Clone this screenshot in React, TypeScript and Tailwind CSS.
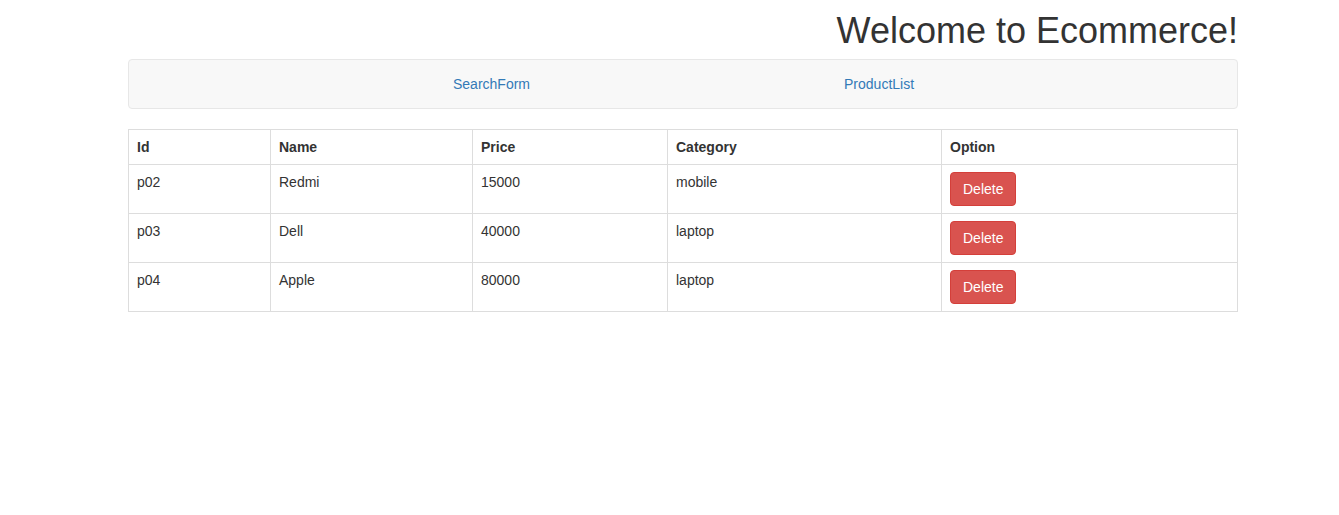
const products = [
  { id: 'p02', name: 'Redmi', price: 15000, category: 'mobile' },
  { id: 'p03', name: 'Dell', price: 40000, category: 'laptop' },
  { id: 'p04', name: 'Apple', price: 80000, category: 'laptop' },
];

const cell = 'border border-[#ddd] px-[8px] py-[7px] text-left align-top leading-[20px]';

export default function App() {
  return (
    <div className="min-h-screen bg-white font-['Liberation_Sans',Arial,sans-serif] text-[14px] text-[#333]">
      <div className="ml-[128px] w-[1110px]">
        <h1 className="mt-[11px] mb-[8px] h-[40px] text-right text-[36px] leading-[40px] font-normal">
          Welcome to Ecommerce!
        </h1>

        <nav className="mb-[20px] flex h-[50px] items-center rounded-[4px] border border-[#e7e7e7] bg-[#f8f8f8]">
          <a href="#" className="ml-[324px] leading-[20px] text-[#337ab7]">SearchForm</a>
          <a href="#" className="ml-[314px] leading-[20px] text-[#337ab7]">ProductList</a>
        </nav>

        <table className="w-full table-fixed border-collapse">
          <colgroup>
            <col className="w-[142px]" />
            <col className="w-[202px]" />
            <col className="w-[195px]" />
            <col className="w-[274px]" />
            <col />
          </colgroup>
          <thead>
            <tr>
              <th className={`${cell} font-bold`}>Id</th>
              <th className={`${cell} font-bold`}>Name</th>
              <th className={`${cell} font-bold`}>Price</th>
              <th className={`${cell} font-bold`}>Category</th>
              <th className={`${cell} font-bold`}>Option</th>
            </tr>
          </thead>
          <tbody>
            {products.map((p) => (
              <tr key={p.id}>
                <td className={cell}>{p.id}</td>
                <td className={cell}>{p.name}</td>
                <td className={cell}>{p.price}</td>
                <td className={cell}>{p.category}</td>
                <td className={cell}>
                  <button
                    type="button"
                    className="h-[34px] rounded-[4px] border border-[#d43f3a] bg-[#d9534f] px-[12px] text-[14px] leading-[20px] text-white"
                  >
                    Delete
                  </button>
                </td>
              </tr>
            ))}
          </tbody>
        </table>
      </div>
    </div>
  );
}
